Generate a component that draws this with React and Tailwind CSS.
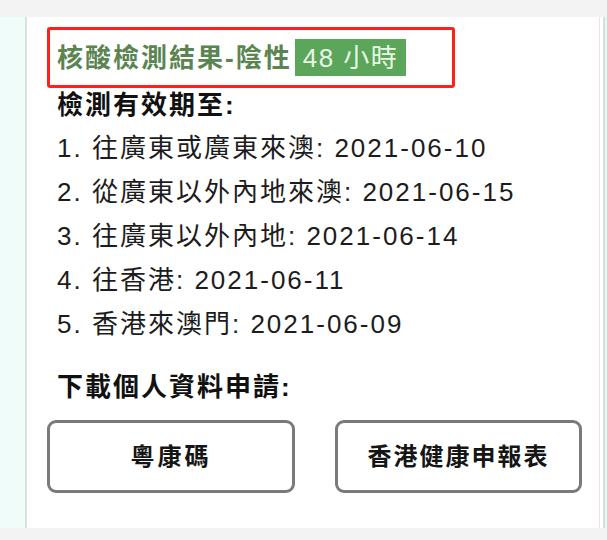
import React from 'react';

const items = [
  { n: '1.', label: '往廣東或廣東來澳', date: '2021-06-10' },
  { n: '2.', label: '從廣東以外內地來澳', date: '2021-06-15' },
  { n: '3.', label: '往廣東以外內地', date: '2021-06-14' },
  { n: '4.', label: '往香港', date: '2021-06-11' },
  { n: '5.', label: '香港來澳門', date: '2021-06-09' },
];

export default function App() {
  return (
    <div
      className="w-[607px] h-[540px] bg-[#f3f3f3] pt-[17px] overflow-hidden"
      style={{ fontFamily: '"Liberation Sans", "Noto Sans CJK TC", sans-serif' }}
    >
      <div className="flex h-[511px]">
        {/* left strip */}
        <div className="w-[25px] bg-[#effcfa]" />
        <div className="w-[2px] bg-[#d9e1df]" />

        {/* card */}
        <div className="flex-1 bg-white border-r border-[#e6e6e6] pl-[20px] pt-[10px]">
          <div className="w-[408px] h-[61px] border-[3px] border-[#ff1f1f] rounded-[3px] flex items-center pl-[7px]">
            <span className="text-[26px] leading-none font-semibold text-[#5a8450] tracking-[2px]">
              核酸檢測結果-陰性
            </span>
            <span className="ml-[3px] h-[37px] px-[8px] flex items-center bg-[#5ba65a] text-[#eaf7e4] text-[26px] leading-none tracking-[1.5px]">
              48 小時
            </span>
          </div>

          <div className="pl-[10px]">
            <div className="h-[34px] flex items-center text-[26px] font-bold text-[#111] tracking-[2px]">
              檢測有效期至:
            </div>
            <div className="mt-[4px]">
              {items.map((it) => (
                <div key={it.n} className="h-[44px] flex items-center text-[26px] text-[#1c1c1c] tracking-[2px] whitespace-nowrap">
                  {it.n} {it.label}: {it.date}
                </div>
              ))}
            </div>
            <div className="mt-[24px] h-[34px] flex items-center text-[26px] font-bold text-[#111] tracking-[2px]">
              下載個人資料申請:
            </div>
          </div>

          <div className="mt-[16px] flex gap-[40px]">
            <button className="w-[248px] h-[73px] border-[3px] border-[#7a7a7a] rounded-[9px] bg-white text-[24px] font-bold text-[#151515] tracking-[3px] flex items-center justify-center">
              粵康碼
            </button>
            <button className="w-[247px] h-[73px] border-[3px] border-[#7a7a7a] rounded-[9px] bg-white text-[24px] font-bold text-[#151515] tracking-[2px] flex items-center justify-center">
              香港健康申報表
            </button>
          </div>
        </div>

        {/* right strip */}
        <div className="w-[3px] bg-white" />
        <div className="w-[2px] bg-[#d3e2de]" />
        <div className="w-[2px] bg-[#eef6f4]" />
      </div>
    </div>
  );
}
